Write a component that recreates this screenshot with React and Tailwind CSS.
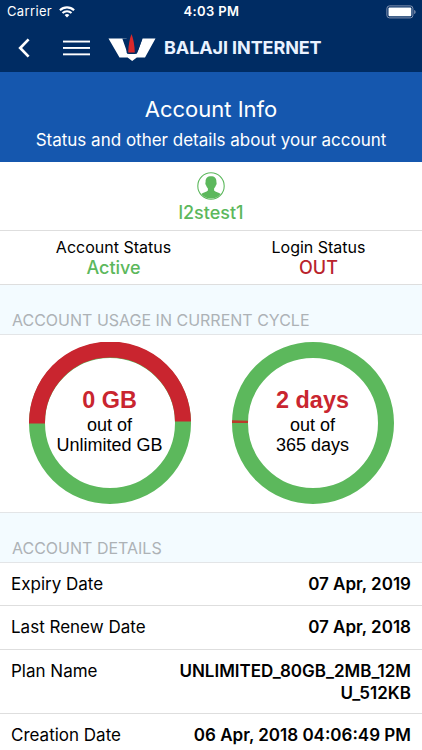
const details = [
  { label: "Expiry Date", value: "07 Apr, 2019", height: "h-[43px]" },
  { label: "Last Renew Date", value: "07 Apr, 2018", height: "h-[44px]" },
  { label: "Plan Name", value: "UNLIMITED_80GB_2MB_12MU_512KB", height: "h-16" },
  { label: "Creation Date", value: "06 Apr, 2018 04:06:49 PM", height: "h-[44px]" },
]

const StatusBar = () => {
  return (
    <div className="grid grid-cols-3 items-center h-6 pl-[7px] pr-[6px] text-[13px]">
      <div className="flex items-center gap-[7px]">
        <span className="tracking-[0.35px]">Carrier</span>
        <svg width="16" height="12" viewBox="0 0 16 12" fill="none" stroke="#fff">
          <path d="M0.9 4.3a10.1 10.1 0 0 1 14.2 0" strokeWidth="2.1" />
          <path d="M3.5 7a6.4 6.4 0 0 1 9 0" strokeWidth="2" />
          <path d="M8 11.6 5.6 9.1a3.4 3.4 0 0 1 4.8 0z" fill="#fff" stroke="none" />
        </svg>
      </div>
      <span className="text-center font-semibold tracking-[0.35px]">4:03 PM</span>
      <svg className="justify-self-end" width="30" height="14" viewBox="0 0 30 14">
        <rect x="0.9" y="0.9" width="26" height="12" rx="2.6" fill="none" stroke="#8393b0" strokeWidth="1" />
        <rect x="2.5" y="2.5" width="22.8" height="8.8" rx="1" fill="#fff" />
        <path d="M28.2 5v4c.9-.4 1.4-1.1 1.4-2s-.5-1.6-1.4-2z" fill="#8393b0" />
      </svg>
    </div>
  )
}

const NavBar = () => {
  return (
    <div className="flex items-center h-[47px] pl-[18px]">
      {/* Back */}
      <svg width="12" height="20" viewBox="0 0 12 20" fill="none" stroke="#fff" strokeWidth="2.7">
        <path d="M10.6 1.4 2.2 10l8.4 8.6" />
      </svg>
      {/* Menu */}
      <svg className="ml-[33px]" width="27" height="16" viewBox="0 0 27 16" fill="#fff">
        <rect y="0.6" width="27" height="1.9" />
        <rect y="7" width="27" height="1.9" />
        <rect y="13.4" width="27" height="1.9" />
      </svg>
      {/* Logo */}
      <svg className="ml-[18px]" width="48" height="28" viewBox="0 0 48 28">
        <path
          d="M0.5 4.5H18.6V18.5Q18.6 20 21 20H27Q29.2 20 29.4 18.5L34.5 4.5H47.5L37 23.5H28.8L24.2 27 19.6 23.5H11.5Z"
          fill="#fff"
        />
        <path d="M20 4.5 19.2 18.5 14.3 4.5ZM28.4 4.5H34.5L29.4 18.5Z" fill="#002c63" />
        <path d="M23.5 0C25.4 4.6 26.5 11 26.8 18.4H20.2C20.5 11 21.6 4.6 23.5 0Z" fill="#d9292b" />
      </svg>
      <span className="ml-[8px] text-[18px] font-bold tracking-[-0.1px] text-[#eaf2ff]">BALAJI INTERNET</span>
    </div>
  )
}

const SectionTitle = ({ children }) => {
  return (
    <div className="flex items-end h-[50px] pl-3 pb-[2px] border-b border-[#e3e5e7] bg-[#f3fbff] text-[16px] text-[#adb2b6]">
      {children}
    </div>
  )
}

const Donut = ({ arc, arcColor, value, total }) => {
  return (
    <div className="relative w-[162px] h-[162px]">
      <svg width="162" height="162" viewBox="0 0 162 162" fill="none" strokeWidth="16">
        <circle cx="81" cy="81" r="73" stroke="#5cb85c" />
        <path d={arc} stroke={arcColor} />
      </svg>
      {/* Label in the hole */}
      <div className="absolute inset-0 flex flex-col items-center pt-[43px] font-['Liberation_Sans',sans-serif] text-[18px] leading-5 text-black">
        <span className="text-[23.4px] leading-[30px] font-bold text-[#c9252f]">{value}</span>
        <span>out of</span>
        <span>{total}</span>
      </div>
    </div>
  )
}

export default function App() {
  return (
    <div className="w-full h-[750px] overflow-hidden bg-white font-[Inter,sans-serif] text-black">
      <header className="h-[72px] bg-[#002c63] text-white">
        <StatusBar />
        <NavBar />
      </header>

      <div className="flex flex-col items-center h-[90px] pt-[22px] bg-[#1557ae] text-white">
        <h1 className="text-[22px] leading-[30px]">Account Info</h1>
        <p className="text-[17px] leading-8">Status and other details about your account</p>
      </div>

      {/* User */}
      <div className="flex flex-col items-center h-[69px] pt-[10px] border-b border-[#dedede] text-[#5cb85c]">
        <svg width="28" height="28" viewBox="0 0 28 28">
          <circle cx="14" cy="14" r="13.2" fill="none" stroke="#5cb85c" strokeWidth="1.1" />
          <path
            d="M14 4.2c3.6 0 5.6 2 5.4 5.6 0 .8.4 1 .2 2.1-.2 1-.7 1.2-.9 1.9-.3 1.3-.9 2-1.6 2.6v2.1c1.2 1.6 4.8 1.9 6.6 3.6A12.6 12.6 0 0 1 14 26.6 12.6 12.6 0 0 1 4.3 22.100c1.800-1.700 5.400-2 6.600-3.600v-2.100c-.7-.6-1.300-1.300-1.600-2.600-.2-.7-.7-.9-.9-1.900-.2-1.100.2-1.300.2-2.100C8.400 6.200 10.400 4.200 14 4.200z"
            fill="#5cb85c"
          />
        </svg>
        <span className="text-[18px] leading-[26px] font-medium">l2stest1</span>
      </div>

      {/* Statuses */}
      <div className="flex h-[54px] pt-[6px] pl-[11px] pr-[1px] border-b border-[#dedede] text-center">
        <div className="w-[205px]">
          <p className="text-[16px] leading-5">Account Status</p>
          <p className="text-[18px] leading-[22px] font-medium text-[#5cb85c]">Active</p>
        </div>
        <div className="w-[205px]">
          <p className="text-[16px] leading-5">Login Status</p>
          <p className="text-[18px] leading-[22px] font-medium text-[#b9232c]">OUT</p>
        </div>
      </div>

      <SectionTitle>ACCOUNT USAGE IN CURRENT CYCLE</SectionTitle>
      <div className="flex gap-[41px] h-[178px] pt-[7px] pl-[28.5px] border-b border-[#e3e5e7]">
        <Donut arc="M8 81.500A73 73 0 0 1 154 79.500" arcColor="#c9252f" value="0 GB" total="Unlimited GB" />
        <Donut arc="M8 81A73 73 0 0 1 8.050 78.500" arcColor="#bb3a2a" value="2 days" total="365 days" />
      </div>

      <SectionTitle>ACCOUNT DETAILS</SectionTitle>
      {details.map(({ label, value, height }) => (
        <div key={label} className={`flex justify-between pt-[10px] px-[11px] border-b border-[#dedede] text-[17px] leading-[22px] ${height}`}>
          <span className="shrink-0">{label}</span>
          <span className="max-w-[244px] font-semibold text-right break-all">{value}</span>
        </div>
      ))}
    </div>
  )
}
